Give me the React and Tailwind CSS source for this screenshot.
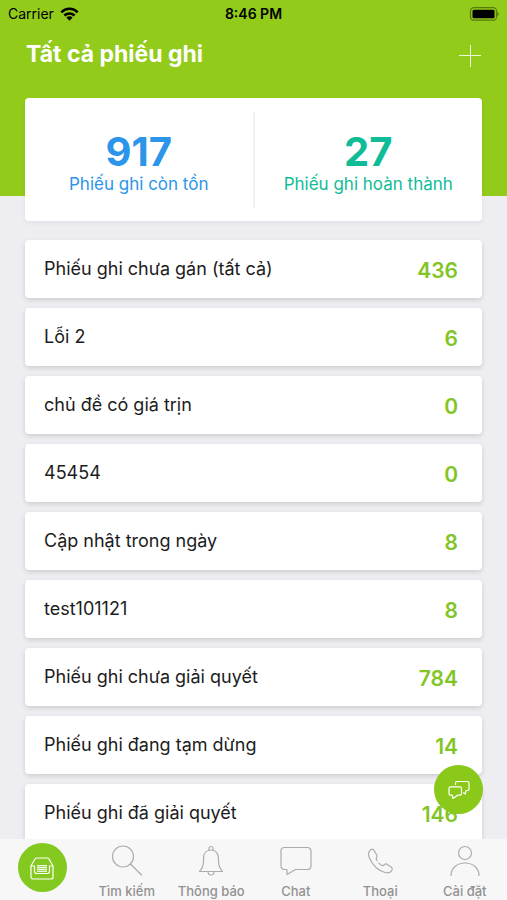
const summary = [
  { label: 'Phiếu ghi còn tồn', count: 917, color: 'text-[#2b95e9]' },
  { label: 'Phiếu ghi hoàn thành', count: 27, color: 'text-[#10bc98]' },
];

const tickets = [
  { label: 'Phiếu ghi chưa gán (tất cả)', count: 436 },
  { label: 'Lỗi 2', count: 6 },
  { label: 'chủ đề có giá trịn', count: 0 },
  { label: '45454', count: 0 },
  { label: 'Cập nhật trong ngày', count: 8 },
  { label: 'test101121', count: 8 },
  { label: 'Phiếu ghi chưa giải quyết', count: 784 },
  { label: 'Phiếu ghi đang tạm dừng', count: 14 },
  { label: 'Phiếu ghi đã giải quyết', count: 146 },
];

const tabs = [
  {
    label: 'Tìm kiếm',
    icon: (
      <>
        <circle cx="12" cy="11.500" r="10.500" />
        <path d="M19.500 19 30.500 30" />
      </>
    ),
  },
  {
    label: 'Thông báo',
    icon: (
      <>
        <path d="M4.500 26.500h23c-3-3.500-4-5.500-4-10v-3c0-5-2.800-8.500-7.500-8.500s-7.500 3.500-7.500 8.500v3c0 4.500-1 6.500-4 10Z" />
        <path d="M14 5.200V3.500a2 2 0 0 1 4 0v1.700M13 26.500a3 3.500 0 0 0 6 0" />
      </>
    ),
  },
  {
    label: 'Chat',
    icon: (
      <path d="M4.500 2.500h23a3.500 3.500 0 0 1 3.500 3.500v15a3.500 3.500 0 0 1-3.500 3.500H15.500L7 29.500v-5H4.500A3.500 3.500 0 0 1 1 21V6a3.500 3.500 0 0 1 3.500-3.500Z" />
    ),
  },
  {
    label: 'Thoại',
    icon: (
      <path d="M13 15.500c-1.500-1.500-1-2.300-.3-3.300.7-1 .5-1.700 0-2.500L9.800 5.200c-.8-1.200-2-1.300-3-.5-2.600 2-3 4.300-1.600 7.800C8.500 20 14 25.500 21 27.500c3 .9 5.500.3 7-2.500.6-1.200.3-2.200-.8-3l-4-2.600c-1.200-.8-2-.6-2.900.3-.9.800-1.600 1.200-2.800.6-1-.5-1.800-1.200-2.700-2.100" />
    ),
  },
  {
    label: 'Cài đặt',
    icon: (
      <>
        <circle cx="16" cy="8" r="6.500" />
        <path d="M2 30.500c0-7.500 6-12.500 14-12.500s14 5 14 12.500" />
      </>
    ),
  },
];

function StatusBar() {
  return (
    <div className="grid h-7 grid-cols-3 items-center pl-2 pr-2 text-black">
      <div className="flex items-center gap-1.5 text-[14px] leading-5">
        <span>Carrier</span>
        <svg width="19" height="14" viewBox="0 0 19 14" fill="none" stroke="currentColor" strokeWidth="2.500">
          <path d="M1.300 5.300a11.500 11.500 0 0 1 16.400 0M4.400 8.500a7.200 7.200 0 0 1 10.200 0" />
          <path d="M6.400 10.500a4.400 4.400 0 0 1 6.200 0L9.500 13.700Z" fill="currentColor" stroke="none" />
        </svg>
      </div>
      <time className="text-center text-[14px] font-semibold leading-5">8:46 PM</time>
      <svg className="justify-self-end" width="32" height="15" viewBox="0 0 32 15">
        <rect x="3.500" y="0.700" width="26" height="12.500" rx="3.500" fill="none" stroke="#000" strokeOpacity=".4" strokeWidth="1.300" />
        <rect x="5.500" y="2.700" width="22" height="8.500" rx="1.500" fill="#000" />
        <path d="M30.300 5c2 .8 2 3.200 0 4Z" fill="#000" fillOpacity=".4" />
      </svg>
    </div>
  );
}

function TicketRow({ label, count }) {
  return (
    <li>
      <a
        href="#"
        className="flex h-[58px] items-center justify-between rounded-[4px] bg-white pl-[19px] pr-6 shadow-[0_2px_5px_rgba(0,0,0,0.14)]"
      >
        <span className="text-[18px] leading-6 text-[#1c1c1c]">{label}</span>
        <span className="pt-1 text-[21px] font-semibold leading-6 text-[#82c526]">{count}</span>
      </a>
    </li>
  );
}

export default function App() {
  return (
    <div className="relative flex h-screen flex-col bg-[#eeedf2] font-['Inter','Noto_Sans',sans-serif]">
      <main className="min-h-0 flex-1 overflow-y-auto [scrollbar-width:none]">
        <header className="h-[196px] bg-[#92cb1a]">
          <StatusBar />
          <div className="flex items-start justify-between pl-[26px] pr-[25px] pt-2">
            <h1 className="text-[23px] font-bold leading-9 text-white">Tất cả phiếu ghi</h1>
            <button type="button" aria-label="Thêm" className="pt-2 text-white">
              <svg width="24" height="24" viewBox="0 0 24 24" fill="none" stroke="currentColor" strokeWidth="1" strokeOpacity=".85">
                <path d="M1 11.500h22M12.500 1v22" />
              </svg>
            </button>
          </div>
        </header>

        <div className="-mt-[98px] px-[25px] pb-4">
          <section className="flex h-[123px] items-center rounded-[4px] bg-white shadow-[0_2px_5px_rgba(0,0,0,0.06)]">
            {summary.map((item, i) => (
              <a
                key={item.label}
                href="#"
                className={`flex h-24 flex-1 flex-col items-center justify-center pt-2 ${i > 0 ? 'border-l-2 border-[#f1f1f4]' : ''} ${item.color}`}
              >
                <span className="text-[40px] font-bold leading-10">{item.count}</span>
                <span className="text-[17px] leading-6">{item.label}</span>
              </a>
            ))}
          </section>

          <ul className="mt-[19px] flex flex-col gap-[10px]">
            {tickets.map((ticket) => (
              <TicketRow key={ticket.label} {...ticket} />
            ))}
          </ul>
        </div>
      </main>

      <button
        type="button"
        aria-label="Trò chuyện"
        className="absolute bottom-[86px] right-6 flex size-[49px] items-center justify-center rounded-full bg-[#8ac819] text-white"
      >
        <svg width="24" height="22" viewBox="0 0 24 22" fill="none" stroke="currentColor" strokeWidth="1.200" strokeLinejoin="round" strokeLinecap="round">
          <path d="M3.500 7.800h9.500a1.500 1.500 0 0 1 1.500 1.500v5.400a1.500 1.500 0 0 1-1.500 1.500h-2.500L6 19.500l-.8-3.300H3.500A1.500 1.500 0 0 1 2 14.700V9.300a1.500 1.500 0 0 1 1.500-1.500Z" />
          <path d="M8.500 5.500V4A1.500 1.500 0 0 1 10 2.500h10.500A1.500 1.500 0 0 1 22 4v6a1.500 1.500 0 0 1-1.500 1.500h-1.300L18 15l-1.500-1.200" />
        </svg>
      </button>

      <nav className="grid h-[61px] shrink-0 grid-cols-6 bg-[#f7f7f7]">
        <a href="#" aria-label="Phiếu ghi" className="flex items-start justify-center pt-1">
          <span className="flex size-[49px] items-center justify-center rounded-full bg-[#84c91f] text-white">
            <svg width="26" height="26" viewBox="0 0 26 26" fill="none" stroke="currentColor" strokeWidth="1.200" strokeLinejoin="round">
              <path d="M2 11 6 4Q6.600 3 8 3h10q1.400 0 2 1l4 7v11a2 2 0 0 1-2 2H4a2 2 0 0 1-2-2Z" />
              <path d="M2 11h3.500v5q0 2.500 2.500 2.500h10q2.500 0 2.500-2.500v-5H24" />
              <path d="M8 10h10v6.500H8Z" fill="currentColor" fillOpacity=".35" stroke="none" />
              <path d="M8 10.500h10M8 12.500h10M8 14.500h10M8 16.500h10" strokeWidth=".8" />
            </svg>
          </span>
        </a>
        {tabs.map((tab) => (
          <a key={tab.label} href="#" className="flex flex-col items-center pt-[6px] text-[#929292]">
            <svg className="text-[#a9adb2]" width="32" height="32" viewBox="0 0 32 32" fill="none" stroke="currentColor" strokeWidth="1.200" strokeLinecap="round" strokeLinejoin="round">
              {tab.icon}
            </svg>
            <span className="mt-[6px] whitespace-nowrap text-[13px] font-medium leading-4">{tab.label}</span>
          </a>
        ))}
      </nav>
    </div>
  );
}
